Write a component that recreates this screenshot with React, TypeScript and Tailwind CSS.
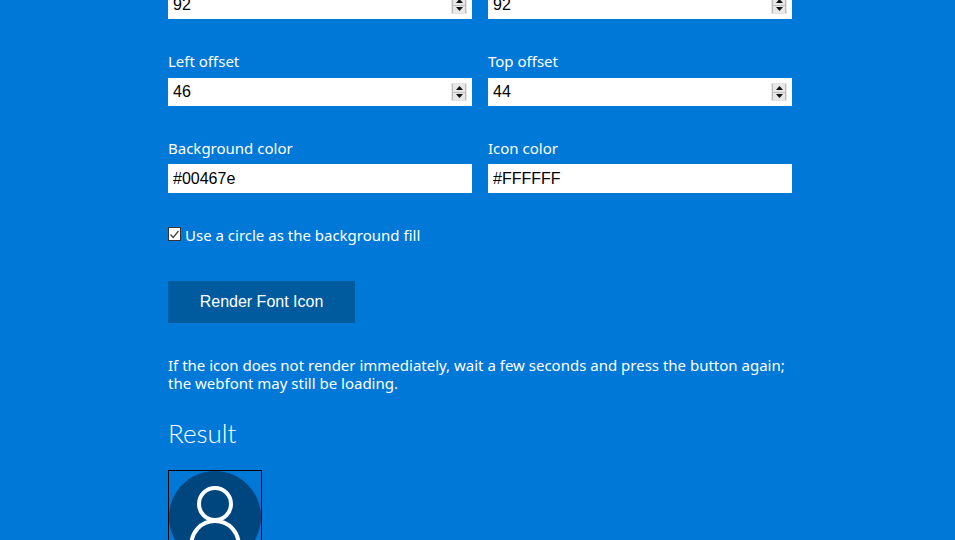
function Spinner() {
  return (
    <div className="absolute right-[5px] top-[5px] flex h-[18px] w-4 flex-col gap-px border border-[#e3e3e3] bg-[#bdbdbd] px-px">
      <div className="flex flex-1 items-center justify-center bg-[#e8e8e8]">
        <svg width="7" height="4" viewBox="0 0 7 4">
          <path d="M3.5 0 7 4H0z" fill="#111" />
        </svg>
      </div>
      <div className="flex flex-1 items-center justify-center bg-[#e8e8e8]">
        <svg width="7" height="4" viewBox="0 0 7 4">
          <path d="M0 0h7L3.5 4z" fill="#111" />
        </svg>
      </div>
    </div>
  );
}

function Field({
  label,
  value,
  spin,
  tall,
}: {
  label?: string;
  value: string;
  spin?: boolean;
  tall?: boolean;
}) {
  return (
    <div>
      {label && (
        <label className={`block h-[22px] leading-[22px] ${tall ? "mb-[5px]" : "mb-[6px]"}`}>{label}</label>
      )}
      <div className={`relative bg-white ${tall ? "h-[29px]" : "h-[28px]"}`}>
        <input
          readOnly
          value={value}
          className="h-full w-full pl-[5px] font-['Liberation_Sans',sans-serif] text-base text-black outline-none"
        />
        {spin && <Spinner />}
      </div>
    </div>
  );
}

export default function App() {
  return (
    <div className="h-[540px] overflow-hidden bg-[#0078d7] font-['Noto_Sans',sans-serif] text-[15px] text-white">
      <div className="mx-[168px] -mt-[9px] w-[624px]">
        <div className="grid grid-cols-2 gap-x-4">
          <Field value="92" spin />
          <Field value="92" spin />
        </div>
        <div className="mt-[31px] grid grid-cols-2 gap-x-4">
          <Field label="Left offset" value="46" spin />
          <Field label="Top offset" value="44" spin />
        </div>
        <div className="mt-[31px] grid grid-cols-2 gap-x-4">
          <Field label="Background color" value="#00467e" tall />
          <Field label="Icon color" value="#FFFFFF" tall />
        </div>
        <label className="mt-[32px] flex h-5 items-center gap-1">
          <span className="mb-[2px] flex h-[14px] w-[13px] items-center justify-center border border-[#333] bg-white">
            <svg width="11" height="11" viewBox="0 0 11 11" fill="none">
              <path d="M1.5 5.5 4.2 8.5 9.5 2" stroke="#444" strokeWidth="1.3" />
            </svg>
          </span>
          <span>Use a circle as the background fill</span>
        </label>
        <button className="mt-[36px] block h-[42px] w-[187px] bg-[#005a9e] font-['Liberation_Sans',sans-serif] text-base text-white">
          Render Font Icon
        </button>
        <p className="mt-[33px] leading-[18px]">
          If the icon does not render immediately, wait a few seconds and press the button again;
          <br />
          the webfont may still be loading.
        </p>
        <h2 className="mt-[22px] font-['Lato',sans-serif] text-[26px] leading-[38px] font-light">Result</h2>
        <div className="mt-[18px] h-[94px] w-[94px] border border-black">
          <svg width="92" height="92" viewBox="0 0 92 92">
            <circle cx="46" cy="46" r="46" fill="#00467e" />
            <circle cx="46" cy="33" r="16" fill="none" stroke="#fff" strokeWidth="4" />
            <path d="M22 76c0-15 10-26 24-26s24 11 24 26" fill="none" stroke="#fff" strokeWidth="4" />
          </svg>
        </div>
      </div>
    </div>
  );
}
